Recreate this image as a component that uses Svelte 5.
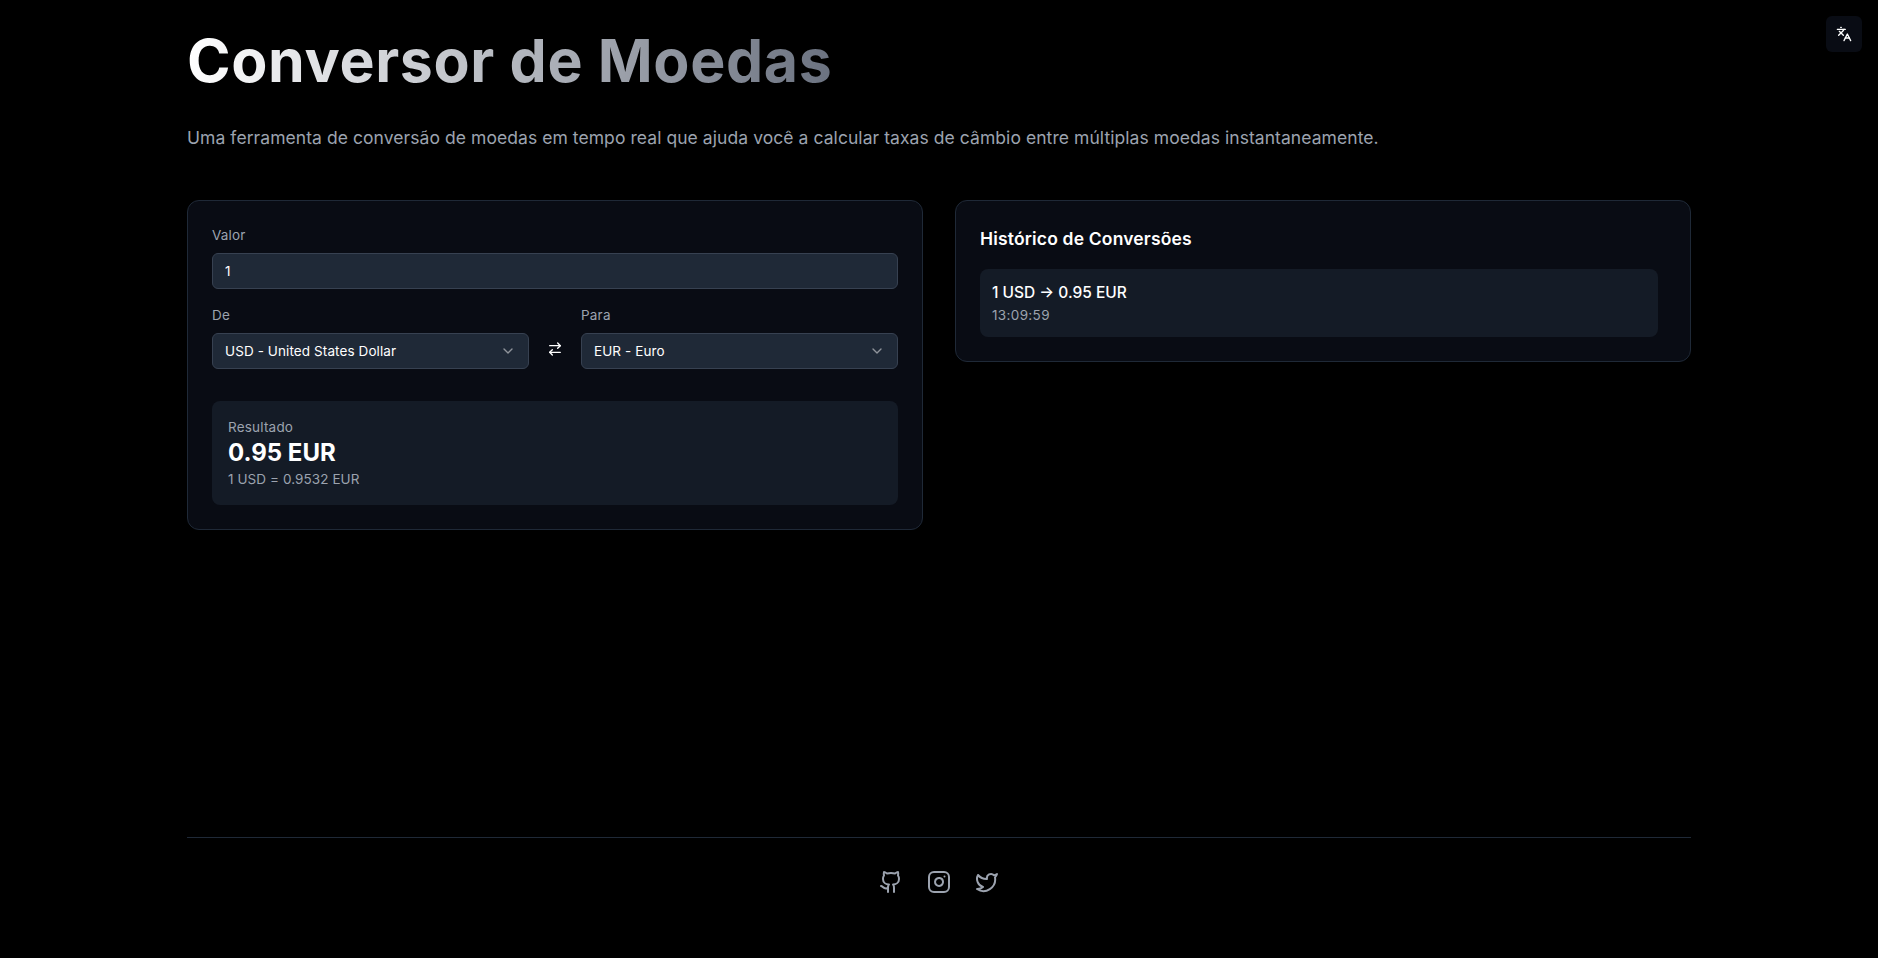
<script>
  const amount = 1;
  const rate = 0.9532;
  const from = { code: 'USD', name: 'United States Dollar' };
  const to = { code: 'EUR', name: 'Euro' };
  const result = (amount * rate).toFixed(2);
  const history = [{ text: `${amount} USD → ${result} EUR`, time: '13:09:59' }];
</script>

{#snippet picker(label, cur)}
  <div class="field grow">
    <span class="label">{label}</span>
    <button class="control select">
      <span>{cur.code} - {cur.name}</span>
      <svg class="chevron" width="16" height="16" viewBox="0 0 24 24"><path d="m6 9 6 6 6-6" /></svg>
    </button>
  </div>
{/snippet}

<div class="page">
  <button class="lang" aria-label="Idioma">
    <svg width="16" height="16" viewBox="0 0 24 24">
      <path d="m5 8 6 6" /><path d="m4 14 6-6 2-3" /><path d="M2 5h12" /><path d="M7 2h1" />
      <path d="m22 22-5-10-5 10" /><path d="M14 18h6" />
    </svg>
  </button>

  <main>
    <h1>Conversor de Moedas</h1>
    <p class="intro">Uma ferramenta de conversão de moedas em tempo real que ajuda você a calcular taxas de câmbio entre múltiplas moedas instantaneamente.</p>

    <div class="columns">
      <section class="card">
        <div class="field">
          <label class="label" for="amount">Valor</label>
          <input id="amount" class="control" value={amount} />
        </div>
        <div class="pair">
          {@render picker('De', from)}
          <button class="swap" aria-label="Inverter">
            <svg width="16" height="16" viewBox="0 0 24 24">
              <path d="m16 3 4 4-4 4" /><path d="M20 7H4" /><path d="m8 21-4-4 4-4" /><path d="M4 17h16" />
            </svg>
          </button>
          {@render picker('Para', to)}
        </div>
        <div class="result">
          <div class="small">Resultado</div>
          <div class="total">{result} {to.code}</div>
          <div class="small rate">1 {from.code} = {rate} {to.code}</div>
        </div>
      </section>

      <section class="card">
        <h2>Histórico de Conversões</h2>
        <div class="list">
          {#each history as h}
            <div class="item">
              <div class="conv">{h.text}</div>
              <div class="small time">{h.time}</div>
            </div>
          {/each}
        </div>
      </section>
    </div>

    <footer>
      <svg width="24" height="24" viewBox="0 0 24 24">
        <path d="M15 22v-4a4.8 4.8 0 0 0-1-3.5c3 0 6-2 6-5.5.08-1.25-.27-2.48-1-3.5.28-1.15.28-2.35 0-3.5 0 0-1 0-3 1.5-2.64-.5-5.36-.5-8 0C6 2 5 2 5 2c-.3 1.15-.3 2.35 0 3.5A5.403 5.403 0 0 0 4 9c0 3.5 3 5.5 6 5.5-.39.49-.68 1.05-.85 1.65-.17.6-.22 1.23-.15 1.85v4" />
        <path d="M9 18c-4.51 2-5-2-7-2" />
      </svg>
      <svg width="24" height="24" viewBox="0 0 24 24">
        <rect width="20" height="20" x="2" y="2" rx="5" />
        <path d="M16 11.37A4 4 0 1 1 12.63 8 4 4 0 0 1 16 11.37z" /><path d="M17.5 6.5h.01" />
      </svg>
      <svg width="24" height="24" viewBox="0 0 24 24">
        <path d="M22 4s-.7 2.1-2 3.4c1.6 10-9.4 17.3-18 11.6 2.2.1 4.4-.6 6-2C3 15.5.5 9.6 3 5c2.2 2.6 5.6 4.1 9 4-.9-4.2 4-6.6 7-3.8 1.1 0 3-1.2 3-1.2z" />
      </svg>
    </footer>
  </main>
</div>

<style>
  :global(body) { background: #000; }
  .page, .page * { box-sizing: border-box; }
  .page {
    min-height: 100vh;
    display: flex;
    background: #000;
    color: #fff;
    font: 400 13.5px/20px Inter, sans-serif;
  }
  main {
    width: 100%;
    max-width: 1536px;
    margin: 0 auto;
    padding: 32px 16px;
    display: flex;
    flex-direction: column;
  }
  svg {
    display: block;
    fill: none;
    stroke: currentColor;
    stroke-width: 2;
    stroke-linecap: round;
    stroke-linejoin: round;
  }
  button { font: inherit; color: inherit; border: 0; background: none; padding: 0; }
  .lang {
    position: absolute;
    top: 16px;
    right: 16px;
    width: 36px;
    height: 36px;
    display: grid;
    place-items: center;
    border-radius: 6px;
    background: rgba(17, 24, 39, 0.5);
  }
  h1 {
    margin: 0 0 34px;
    width: fit-content;
    font-size: 59px;
    line-height: 58px;
    font-weight: 700;
    letter-spacing: 0.63px;
    background: linear-gradient(to right, #fff, #6b7280);
    -webkit-background-clip: text;
    background-clip: text;
    color: transparent;
  }
  .intro {
    margin: 0 0 48px;
    font-size: 17.5px;
    line-height: 28px;
    letter-spacing: 0.065px;
    color: #9ca3af;
  }
  .columns {
    display: grid;
    grid-template-columns: 1fr 1fr;
    gap: 32px;
    align-items: start;
  }
  .card {
    padding: 24px;
    border: 1px solid #1f2937;
    border-radius: 12px;
    background: rgba(17, 24, 39, 0.5);
  }
  .field { display: flex; flex-direction: column; gap: 8px; }
  .grow { flex: 1; }
  .label, .small { color: #9ca3af; letter-spacing: 0.2px; }
  .control {
    width: 100%;
    height: 36px;
    padding: 0 12px;
    border: 1px solid #374151;
    border-radius: 6px;
    background: #1f2937;
    color: #fff;
    font: inherit;
    letter-spacing: 0.1px;
    outline: none;
  }
  .select { display: flex; align-items: center; justify-content: space-between; }
  .chevron { opacity: 0.5; }
  .pair { display: flex; align-items: flex-end; gap: 8px; margin-top: 16px; }
  .swap {
    width: 36px;
    height: 36px;
    margin-bottom: 2px;
    display: grid;
    place-items: center;
  }
  .result {
    margin-top: 32px;
    padding: 16px;
    border-radius: 8px;
    background: rgba(31, 41, 55, 0.5);
  }
  .total { font-size: 24px; line-height: 32px; font-weight: 700; }
  .rate { letter-spacing: 0.08px; }
  h2 { margin: 0 0 16px; font-size: 17.5px; line-height: 28px; font-weight: 600; letter-spacing: 0.17px; }
  .list { padding-right: 8px; }
  .item { padding: 12px; border-radius: 8px; background: rgba(31, 41, 55, 0.5); }
  .conv { font-size: 15.5px; line-height: 24px; font-weight: 500; }
  .time { letter-spacing: 0.35px; }
  footer {
    margin-top: auto;
    padding: 32px 0;
    border-top: 1px solid #1f2937;
    display: flex;
    justify-content: center;
    gap: 24px;
    color: #9ca3af;
  }
</style>
